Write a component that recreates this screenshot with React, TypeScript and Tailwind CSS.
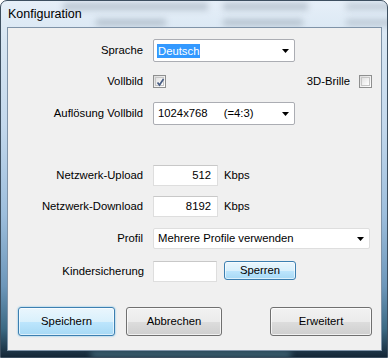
import React from "react";

const font = { fontFamily: '"Liberation Sans", Arial, sans-serif' };

function Arrow() {
  return (
    <svg width="7" height="4" viewBox="0 0 7 4" className="shrink-0">
      <path d="M0 0 H7 L3.5 4 Z" fill="#000" />
    </svg>
  );
}

function Check({ checked }: { checked?: boolean }) {
  return (
    <div className="w-[13px] h-[13px] border border-[#8e8f8f] bg-[linear-gradient(135deg,#dcdcdc_0%,#f4f4f4_60%,#ffffff_100%)] p-[1px] shrink-0">
      <div className="w-full h-full border border-[#c6c6c6] bg-[linear-gradient(135deg,#e2e2e2,#ffffff)] relative">
        {checked && (
          <svg width="11" height="11" viewBox="0 0 11 11" className="absolute left-[-1px] top-[-1px]">
            <path d="M2.5 5.5 L4.5 8 L8.5 2" stroke="#4a5f85" strokeWidth="1.7" fill="none" />
          </svg>
        )}
      </div>
    </div>
  );
}

export default function App() {
  return (
    <div
      className="w-[388px] h-[358px] relative overflow-hidden rounded-t-[7px] border border-[#3d4f60] bg-[linear-gradient(180deg,#e6eff8_0%,#d6e5f2_12%,#c3d8ec_35%,#9dbedc_60%,#6d97ba_80%,#3c6a84_92%,#142636_100%)] text-[11.3px] text-black"
      style={font}
    >
      {/* blurred background smudges in glass */}
      <div className="absolute left-[62px] top-[2px] w-[145px] h-[7px] bg-[#8e9cab] opacity-50 blur-[3px]" />
      <div className="absolute left-[222px] top-[2px] w-[85px] h-[7px] bg-[#8e9cab] opacity-50 blur-[3px]" />
      <div className="absolute left-[345px] top-[2px] w-[50px] h-[7px] bg-[#8e9cab] opacity-40 blur-[3px]" />
      <div className="absolute left-[95px] top-[18px] w-[70px] h-[7px] bg-[#8e9cab] opacity-50 blur-[3px]" />
      <div className="absolute left-[222px] top-[18px] w-[80px] h-[7px] bg-[#8e9cab] opacity-50 blur-[3px]" />
      <div className="absolute left-[345px] top-[18px] w-[50px] h-[7px] bg-[#8e9cab] opacity-40 blur-[3px]" />
      <div className="absolute left-[90px] bottom-[0px] w-[200px] h-[5px] bg-[#6fa6b8] opacity-60 blur-[3px]" />

      <div className="relative h-[26px] pl-[7px] pt-[5px] text-[12.5px] leading-[16px] text-black">
        Konfiguration
      </div>

      <div className="relative ml-[6px] w-[375px] h-[324px] border border-[#7f93a8] bg-[#f0f0f0] flex flex-col">
        {/* Sprache */}
        <div className="flex items-center h-[23px] mt-[11px]">
          <div className="w-[135px] text-right shrink-0">Sprache</div>
          <div className="ml-[10px] w-[142px] h-full border border-[#abadb3] bg-white rounded-[2px] flex items-center pl-[3px] pr-[5px]">
            <span className="bg-[#3399ff] text-white px-[1px] leading-[14px]">Deutsch</span>
            <div className="ml-auto"><Arrow /></div>
          </div>
        </div>

        {/* Vollbild */}
        <div className="flex items-center h-[13px] mt-[13px]">
          <div className="w-[135px] text-right shrink-0">Vollbild</div>
          <div className="ml-[10px]"><Check checked /></div>
          <div className="ml-auto">3D-Brille</div>
          <div className="ml-[9px] mr-[9px]"><Check /></div>
        </div>

        {/* Auflösung */}
        <div className="flex items-center h-[23px] mt-[14px]">
          <div className="w-[135px] text-right shrink-0">Auflösung Vollbild</div>
          <div className="ml-[10px] w-[142px] h-full border border-[#abadb3] bg-white rounded-[2px] flex items-center pl-[4px] pr-[5px]">
            <span>1024x768</span>
            <span className="ml-[16px]">(=4:3)</span>
            <div className="ml-auto"><Arrow /></div>
          </div>
        </div>

        {/* Upload */}
        <div className="flex items-center h-[21px] mt-[40px]">
          <div className="w-[135px] text-right shrink-0">Netzwerk-Upload</div>
          <div className="ml-[10px] w-[65px] h-full border border-[#dedede] border-t-[#c8c8c8] bg-white flex items-center justify-end pr-[6px]">512</div>
          <div className="ml-[6px]">Kbps</div>
        </div>

        {/* Download */}
        <div className="flex items-center h-[21px] mt-[10px]">
          <div className="w-[135px] text-right shrink-0">Netzwerk-Download</div>
          <div className="ml-[10px] w-[65px] h-full border border-[#dedede] border-t-[#c8c8c8] bg-white flex items-center justify-end pr-[6px]">8192</div>
          <div className="ml-[6px]">Kbps</div>
        </div>

        {/* Profil */}
        <div className="flex items-center h-[21px] mt-[11px]">
          <div className="w-[135px] text-right shrink-0">Profil</div>
          <div className="ml-[10px] w-[217px] h-full border border-[#dedede] bg-white rounded-[2px] flex items-center pl-[4px] pr-[5px]">
            <span>Mehrere Profile verwenden</span>
            <div className="ml-auto"><Arrow /></div>
          </div>
        </div>

        {/* Kindersicherung */}
        <div className="flex items-start h-[21px] mt-[12px]">
          <div className="w-[136px] text-right shrink-0 leading-[21px]">Kindersicherung</div>
          <div className="ml-[9px] w-[64px] h-full border border-[#dedede] border-t-[#c8c8c8] bg-white" />
          <div className="ml-[7px] w-[72px] h-[19px] rounded-[3px] border border-[#3c7fb1] bg-[linear-gradient(180deg,#eaf6fd_0%,#d9f0fc_50%,#bee6fd_50%,#a7d9f5_100%)] shadow-[inset_0_0_0_1px_rgba(255,255,255,0.6)] flex items-center justify-center">
            Sperren
          </div>
        </div>

        {/* Buttons */}
        <div className="flex items-center h-[29px] mt-[25px]">
          <div className="ml-[10px] w-[97px] h-full rounded-[3px] border border-[#3c7fb1] bg-[linear-gradient(180deg,#eaf6fd_0%,#d9f0fc_50%,#bee6fd_50%,#a7d9f5_100%)] shadow-[inset_0_0_0_1px_rgba(255,255,255,0.6),0_0_2px_#5fb6e3] flex items-center justify-center">
            Speichern
          </div>
          <div className="ml-[11px] w-[96px] h-full rounded-[3px] border border-[#707070] bg-[linear-gradient(180deg,#f2f2f2_0%,#ebebeb_50%,#dddddd_50%,#cfcfcf_100%)] shadow-[inset_0_0_0_1px_rgba(255,255,255,0.7)] flex items-center justify-center">
            Abbrechen
          </div>
          <div className="ml-auto mr-[9px] w-[102px] h-full rounded-[3px] border border-[#707070] bg-[linear-gradient(180deg,#f2f2f2_0%,#ebebeb_50%,#dddddd_50%,#cfcfcf_100%)] shadow-[inset_0_0_0_1px_rgba(255,255,255,0.7)] flex items-center justify-center">
            Erweitert
          </div>
        </div>
      </div>
    </div>
  );
}
